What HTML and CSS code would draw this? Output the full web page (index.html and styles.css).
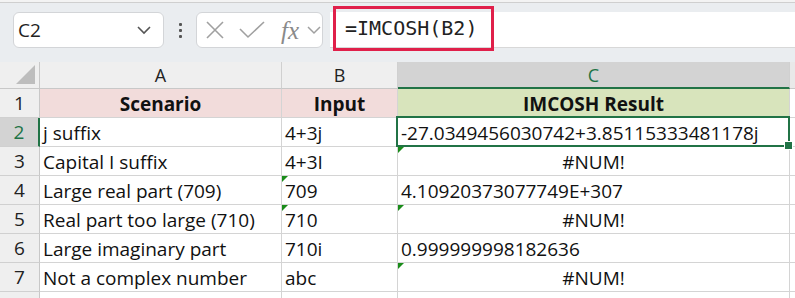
FILE: index.html
```html
<!DOCTYPE html>
<html>
<head>
<meta charset="utf-8">
<link rel="stylesheet" href="styles.css">
</head>
<body>
<div class="topband"></div>
<div class="toolbar">
  <div class="namebox">
    <span class="name">C2</span>
    <svg class="chev" width="16" height="10" viewBox="0 0 16 10"><polyline points="2,2 8,8 14,2" fill="none" stroke="#555" stroke-width="1.6"/></svg>
  </div>
  <div class="dots"><i></i><i></i><i></i></div>
  <div class="fxbox">
    <svg width="20" height="18" viewBox="0 0 20 18"><path d="M2 1 L18 17 M18 1 L2 17" stroke="#a0a0a0" stroke-width="1.6" fill="none"/></svg>
    <svg width="26" height="18" viewBox="0 0 26 18"><polyline points="1,8 9,16 25,1" stroke="#a0a0a0" stroke-width="1.6" fill="none"/></svg>
    <span class="fx">fx</span>
    <svg width="14" height="9" viewBox="0 0 14 9"><polyline points="1,1 7,7 13,1" fill="none" stroke="#a0a0a0" stroke-width="1.5"/></svg>
  </div>
  <div class="formula">
    <div class="hl">=IMCOSH(B2)</div>
  </div>
</div>
<div class="sheet">
  <div class="corner"><span class="tri"></span></div>
  <div class="ch">A</div>
  <div class="ch">B</div>
  <div class="ch sel">C</div>
  <div class="ch rest"></div>

  <div class="rh">1</div>
  <div class="c hdr pink">Scenario</div>
  <div class="c hdr pink">Input</div>
  <div class="c hdr green">IMCOSH Result</div>
  <div class="c rest"></div>

  <div class="rh sel">2</div>
  <div class="c">j suffix</div>
  <div class="c">4+3j</div>
  <div class="c active">-27.0349456030742+3.85115333481178j</div>
  <div class="c rest"></div>

  <div class="rh">3</div>
  <div class="c">Capital I suffix</div>
  <div class="c">4+3I</div>
  <div class="c ctr err">#NUM!</div>
  <div class="c rest"></div>

  <div class="rh">4</div>
  <div class="c">Large real part (709)</div>
  <div class="c err">709</div>
  <div class="c">4.10920373077749E+307</div>
  <div class="c rest"></div>

  <div class="rh">5</div>
  <div class="c">Real part too large (710)</div>
  <div class="c err">710</div>
  <div class="c ctr err">#NUM!</div>
  <div class="c rest"></div>

  <div class="rh">6</div>
  <div class="c">Large imaginary part</div>
  <div class="c">710i</div>
  <div class="c">0.999999998182636</div>
  <div class="c rest"></div>

  <div class="rh">7</div>
  <div class="c">Not a complex number</div>
  <div class="c">abc</div>
  <div class="c ctr err">#NUM!</div>
  <div class="c rest"></div>

  <div class="rh"></div>
  <div class="c"></div>
  <div class="c"></div>
  <div class="c"></div>
  <div class="c rest"></div>
</div>
</body>
</html>
```
FILE: styles.css
```css
* { box-sizing: border-box; }
html, body { margin: 0; padding: 0; background: #fff; overflow: hidden; }
body { width: 795px; height: 298px; font-family: "Open Sans", "Liberation Sans", sans-serif; }

.topband { height: 3px; background: #f3f3f3; border-bottom: 1px solid #cfcfcf; }
.toolbar {
  height: 59px;
  background: #eaedf0;
  display: flex;
  align-items: flex-start;
  padding-top: 9px;
  padding-left: 13px;
}
.namebox {
  width: 151px; height: 36px;
  background: #fff;
  border: 1px solid #d3d5d8;
  border-radius: 6px;
  display: flex; align-items: center; justify-content: space-between;
  padding: 0 11px 0 4px;
}
.name { font-family: "Open Sans", "Liberation Sans", sans-serif; font-size: 19px; color: #222; }
.dots { width: 32px; height: 36px; display: flex; flex-direction: column; align-items: center; justify-content: center; gap: 3px; }
.dots i { display: block; width: 3px; height: 3px; background: #555; border-radius: 1px; }
.fxbox {
  width: 127px; height: 36px;
  background: #fff;
  border: 1px solid #d3d5d8;
  border-radius: 6px;
  display: flex; align-items: center;
  padding-left: 8px; gap: 14px;
}
.fxbox .fx { font-family: "Liberation Serif", "DejaVu Serif", serif; font-style: italic; font-size: 25px; line-height: 1; color: #8a8a8a; margin-left: 2px; margin-right: -6px; }
.formula {
  margin-left: 7px;
  flex: 1;
  height: 36px;
  background: #fff;
  border-bottom: 1px solid #d8d8d8;
  position: relative;
}
.hl {
  position: absolute; left: 3px; top: -6px;
  width: 161px; height: 45px;
  border: 3px solid #e0204a;
  font-family: "DejaVu Sans Mono", "Liberation Mono", monospace;
  font-size: 20px; color: #222;
  padding-left: 9px; line-height: 38px;
}

.sheet {
  display: grid;
  grid-template-columns: 40px 242px 116px 392px 5px;
  grid-template-rows: 27px repeat(7, 29px) 20px;
}
.corner { background: #efefef; border-right: 1px solid #c8c8c8; border-bottom: 1px solid #c8c8c8; position: relative; }
.tri { position: absolute; right: 4px; bottom: 4px; width: 0; height: 0; border-left: 19px solid transparent; border-bottom: 19px solid #bdbdbd; }
.ch {
  background: #efefef;
  border-right: 1px solid #d0d0d0;
  border-bottom: 1px solid #c8c8c8;
  font-family: "Open Sans", "Liberation Sans", sans-serif;
  font-size: 18px; color: #222;
  display: flex; align-items: center; justify-content: center;
}
.ch.sel { background: #d3d3d3; color: #217346; border-bottom: 2px solid #217346; }
.ch.rest { background: #e9e9e9; border-right: none; }
.rh {
  background: #efefef;
  border-right: 1px solid #c8c8c8;
  border-bottom: 1px solid #d0d0d0;
  font-family: "Open Sans", "Liberation Sans", sans-serif;
  font-size: 19px; color: #222;
  display: flex; align-items: center; justify-content: center;
}
.rh.sel { background: #d3d3d3; color: #217346; border-right: 2px solid #217346; }
.c {
  border-right: 1px solid #d4d4d4;
  border-bottom: 1px solid #d4d4d4;
  font-size: 19px; color: #111;
  padding: 2px 0 0 3px;
  display: flex; align-items: center;
  white-space: nowrap;
  position: relative;
}
.c.rest { border-right: none; }
.hdr { font-weight: bold; justify-content: center; padding-left: 0; }
.pink { background: #f2dcdb; }
.green { background: #d8e4bc; }
.ctr { justify-content: center; padding-left: 0; }
.err::before {
  content: ""; position: absolute; left: 0; top: 0;
  width: 0; height: 0;
  border-top: 6px solid #1a8c1a; border-right: 6px solid transparent;
}
.active::after {
  content: ""; position: absolute; left: -2px; top: -2px; right: -1px; bottom: -1px;
  border: 2px solid #217346;
}
.active::before {
  content: ""; position: absolute; right: -4px; bottom: -4px;
  width: 7px; height: 7px; background: #217346; border: 1px solid #fff; z-index: 2;
}
```
